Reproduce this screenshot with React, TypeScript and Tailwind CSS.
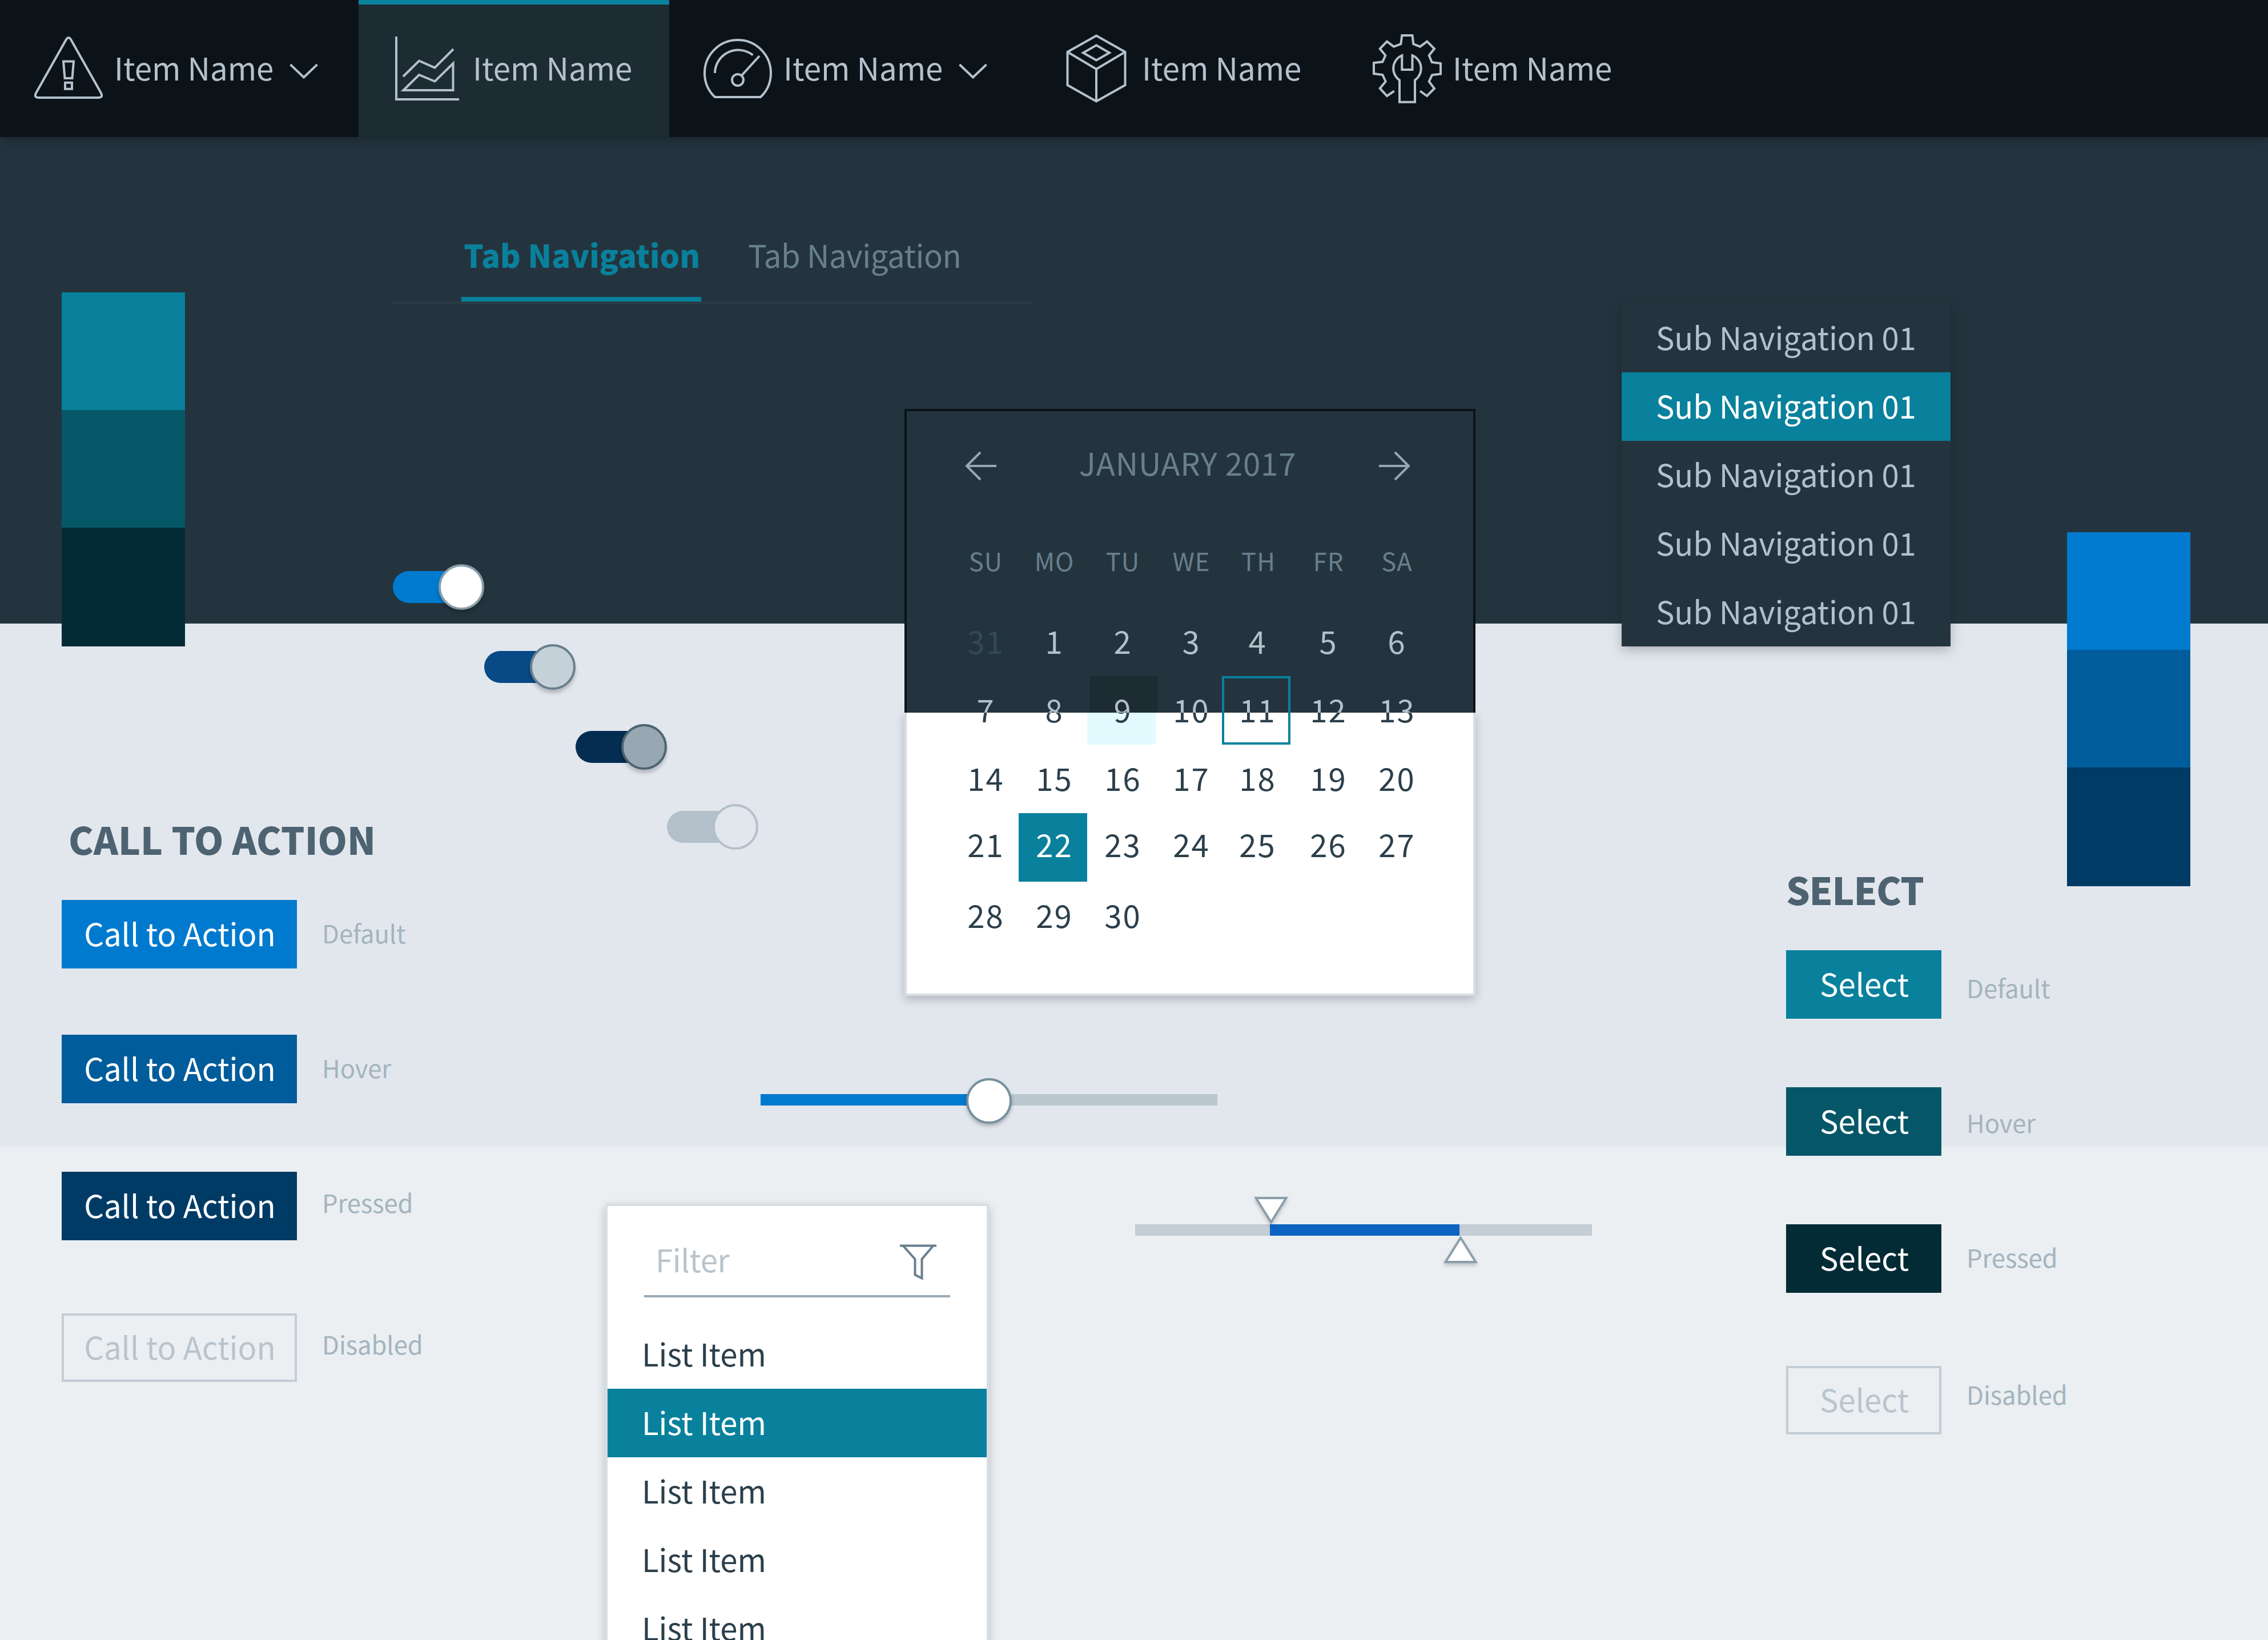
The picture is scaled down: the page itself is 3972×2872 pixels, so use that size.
import type { FC, ReactNode } from "react"

import clsx from "clsx"

interface NavItemProps {
  icon: ReactNode
  active?: boolean
  dropdown?: boolean
}

interface ButtonRowProps {
  label: string
  state: string
  buttonClass: string
  stateClass: string
  rowClass?: string
}

const AlertIcon = () => (
  <svg viewBox="0 0 120 120" className="size-[120px] shrink-0 overflow-visible" fill="none" stroke="currentColor" strokeWidth="4">
    <path d="M56 9Q60 3 64 9L117 103Q121 111 112 111H8Q-1 111 3 103Z" />
    <path d="M51 47.5H69L66.5 77H53.5Z" />
    <path d="M54 84.8H66V95.8H54Z" />
  </svg>
)

const ChartIcon = () => (
  <svg viewBox="0 0 120 120" className="size-[120px] shrink-0" fill="none" stroke="currentColor" strokeWidth="4">
    <path d="M6 4V114H116" />
    <path d="M18 74L46 46.5L73.5 58.5L106 26" />
    <path d="M18.5 98L46 71L73.5 82.5L105.5 51V98Z" />
  </svg>
)

const GaugeIcon = () => (
  <svg viewBox="0 0 120 120" className="size-[120px] shrink-0" fill="none" stroke="currentColor" strokeWidth="4">
    <path d="M20 110A58 58 0 1 1 100 110Z" />
    <path d="M20 68A41 41 0 0 1 86.5 36.5" />
    <path d="M98 38L67 72" />
    <circle cx="60" cy="80" r="10" />
  </svg>
)

const BoxIcon = () => (
  <svg viewBox="0 0 120 120" className="size-[120px] shrink-0" fill="none" stroke="currentColor" strokeWidth="4">
    <path d="M60 2.5L110.5 31V89L60 117.5L9.5 89V31Z" />
    <path d="M9.5 31L60 61L110.5 31M60 61V117" />
    <path d="M60 19.3L83 32.4L60 45.5L37 32.4Z" />
  </svg>
)

const GearIcon = () => (
  <svg viewBox="0 0 120 120" className="size-[120px] shrink-0 overflow-visible" fill="none" stroke="currentColor" strokeWidth="4">
    <path d="M37.7 99.3L25 108L12.7 94.7L22.7 82.7L17.3 71L2 69V50L17.3 48.3L22.3 37L12.7 25.3L25 12.7L37 21.7L49.3 17L51.3 2H69.5L71.3 17L83 21.7L95.3 12.7L108 25.3L98.7 37L103.7 49L119 51V69.5L104 71.3L98.7 82.7L108 95L95 108L83 99.3" />
    <path d="M47 118.7V80.3A24.8 24.8 0 0 1 51.3 37V62H69.5V37A24.8 24.8 0 0 1 74 80.3V118.7Z" />
  </svg>
)

const NavItem: FC<NavItemProps> = ({ icon, active, dropdown }) => (
  <div
    className={clsx(
      "flex items-center h-[240px] pl-[60px] border-t-8",
      active ? "bg-[#1d2b33] border-[#09819c]" : "border-transparent",
      dropdown ? "w-[628px]" : "w-[544px]",
    )}
  >
    <div className="flex items-center pb-2">
      {icon}
      <span className="w-[284px] pb-1 ml-5">Item Name</span>
      {dropdown && (
        <svg viewBox="0 0 64 48" className="w-16 h-12 ml-5" fill="none" stroke="currentColor" strokeWidth="4">
          <path d="M4.5 17L28 39.5L51.5 17" />
        </svg>
      )}
    </div>
  </div>
)

const ButtonRow: FC<ButtonRowProps> = ({ label, state, buttonClass, stateClass, rowClass }) => (
  <div className={clsx("flex h-[120px]", rowClass)}>
    <button className={clsx("flex items-center justify-center h-[120px] pb-1 pl-0.5 shrink-0", buttonClass)}>{label}</button>
    <span className={clsx("ml-11 h-[60px] leading-[60px] text-[43.6px] tracking-[-0.1px] text-[#a3b4be]", stateClass)}>{state}</span>
  </div>
)

const toggles = [
  { row: "", track: "bg-[#007acf]", knob: "bg-white border-[#8a9eaa] shadow-[0_6px_6px_rgba(0,0,0,0.2)]" },
  { row: "ml-40", track: "bg-[#084a86]", knob: "bg-[#c5d1d8] border-[#687f8d] shadow-[0_6px_6px_rgba(0,0,0,0.2)]" },
  { row: "ml-80", track: "bg-[#042d51]", knob: "bg-[#97a8b2] border-[#4d6370] shadow-[0_6px_6px_rgba(0,0,0,0.2)]" },
  { row: "ml-[480px]", track: "bg-[#b3c0c9]", knob: "bg-[#e2e7ee] border-[#b3c0c9]" },
]

const weekdays = ["SU", "MO", "TU", "WE", "TH", "FR", "SA"]

const weeks = [
  ["31", "1", "2", "3", "4", "5", "6"],
  ["7", "8", "9", "10", "11", "12", "13"],
  ["14", "15", "16", "17", "18", "19", "20"],
  ["21", "22", "23", "24", "25", "26", "27"],
  ["28", "29", "30"],
]

// the second week sits on the dark / light split, so its digits change colour half way down
const weekColors = [
  "text-[#b3c0cb] pb-1",
  "text-transparent bg-clip-text bg-[linear-gradient(#b3c0cb_64px,#2c3f4b_64px)] pb-1",
  "text-[#2c3f4b] pb-1",
  "text-[#2c3f4b] pb-3",
  "text-[#2c3f4b] pb-1",
]

const Calendar = () => (
  <div className="relative w-[1000px] h-[1028px] mt-[184px] shrink-0">
    <div className="absolute inset-0 flex flex-col">
      <div className="relative z-10 h-[532px] bg-[#24343e] border-x-4 border-t-4 border-[#0b1319]" />
      <div className="flex-1 bg-white border-x-4 border-b-4 border-[#d7dee4] shadow-[0_6px_16px_rgba(0,0,0,0.22)]" />
    </div>
    <div className="relative z-20 px-20">
      <div className="flex items-center justify-between h-[200px] pl-6 pr-8">
        <svg viewBox="0 0 60 60" className="size-[60px]" fill="none" stroke="#97a8b2" strokeWidth="4">
          <path d="M57 30H5M29 6L5 30L29 54" />
        </svg>
        <span className="text-[#687f8d] tracking-[0.9px] pb-3">JANUARY 2017</span>
        <svg viewBox="0 0 60 60" className="size-[60px]" fill="none" stroke="#97a8b2" strokeWidth="4">
          <path d="M3 30H55M31 6L55 30L31 54" />
        </svg>
      </div>
      <div className="grid grid-cols-7 mt-[35px] mb-[53px]">
        {weekdays.map((day) => (
          <span
            key={day}
            className={clsx("text-center text-[43.6px] leading-[60px] tracking-[1px] text-[#687f8d]", day === "TH" ? "pl-2 -ml-1 mr-1" : "pl-[5px]")}
          >
            {day}
          </span>
        ))}
      </div>
      {weeks.map((week, i) => (
        <div key={i} className="grid grid-cols-7">
          {week.map((day, j) => (
            <div key={day} className={clsx("relative h-[120px]", j === 4 && "-ml-1 mr-1", day === "22" && "bg-[#09819c]")}>
              {day === "9" && (
                <div className="absolute inset-0">
                  <div className="w-[120px] h-16 ml-1 bg-[#1d2b33]" />
                  <div className="w-[120px] h-14 bg-[#e3faff]" />
                </div>
              )}
              {day === "11" && <div className="absolute inset-0 border-4 border-[#09819c]" />}
              <span
                className={clsx(
                  "relative flex items-center justify-center h-[120px] pl-[5px] tracking-[2px]",
                  day === "31" ? "text-[#344957] pb-1" : day === "22" ? "text-white pb-3" : weekColors[i],
                )}
              >
                {day}
              </span>
            </div>
          ))}
        </div>
      ))}
    </div>
  </div>
)

const FilterList = () => (
  <div className="w-[672px] h-[840px] ml-[372px] mt-[140px] shrink-0 bg-white border-4 border-[#d7dee4] shadow-[0_6px_16px_rgba(0,0,0,0.2)]">
    <div className="flex items-center justify-between h-[160px] mx-16 mb-10 pt-7 pl-5 pr-6 border-b-4 border-[#97a9b5]">
      <span className="pt-0.5 tracking-[-0.4px] text-[#b9c4cc]">Filter</span>
      <svg viewBox="0 0 64 64" className="size-16 mt-3" fill="none" stroke="#687f8d" strokeWidth="4">
        <path d="M0 3.5H64M6 4L26.5 27V54.5L38.5 60.5V27L58 4" />
      </svg>
    </div>
    {[0, 1, 2, 3, 4].map((n) => (
      <div
        key={n}
        className={clsx("flex items-center h-[120px] pl-[60px] pb-1", n === 1 ? "bg-[#09819c] text-white" : "text-[#2c3f4b]")}
      >
        List Item
      </div>
    ))}
  </div>
)

const App = () => {
  return (
    <div className="w-[3972px] h-[2872px] overflow-hidden font-['Noto_Sans_CJK_SC',sans-serif] text-[54.5px] leading-[72px]">
      <header className="relative z-10 flex h-[240px] bg-[#0b1319] text-[#b4c1cc] shadow-[0_4px_16px_rgba(0,0,0,0.3)]">
        <NavItem icon={<AlertIcon />} dropdown />
        <NavItem icon={<ChartIcon />} active />
        <NavItem icon={<GaugeIcon />} dropdown />
        <NavItem icon={<BoxIcon />} />
        <NavItem icon={<GearIcon />} />
      </header>

      <main className="flex h-[2632px] overflow-hidden bg-[linear-gradient(#24343e_852px,#e2e7ee_852px,#e2e7ee_1768px,#ebeff2_1768px)]">
        <section className="w-[688px] shrink-0 pl-[108px] pt-[272px]">
          <div className="w-[216px]">
            <div className="h-[206px] bg-[#09819c]" />
            <div className="h-[206px] bg-[#055768]" />
            <div className="h-[208px] bg-[#022b35]" />
          </div>
          <h2 className="ml-3 mt-[301px] mb-[71px] text-[65.5px] font-black whitespace-nowrap text-[#4d6371]">CALL TO ACTION</h2>
          <ButtonRow label="Call to Action" state="Default" buttonClass="w-[412px] bg-[#007acf] text-white" stateClass="mt-[27px]" />
          <ButtonRow label="Call to Action" state="Hover" buttonClass="w-[412px] bg-[#005c9b] text-white" stateClass="mt-[27px]" rowClass="mt-[116px]" />
          <ButtonRow label="Call to Action" state="Pressed" buttonClass="w-[412px] bg-[#003b66] text-white" stateClass="mt-[23px]" rowClass="mt-[120px]" />
          <ButtonRow label="Call to Action" state="Disabled" buttonClass="w-[412px] border-4 border-[#c4ccd4] text-[#b9c4cc]" stateClass="mt-[23px]" rowClass="mt-32" />
        </section>

        <section className="w-[2152px] shrink-0 pt-[176px]">
          <nav className="flex gap-[82px] w-[1120px] h-[116px] pl-[120px] border-b-4 border-[#2a3c46]">
            <span className="w-[420px] h-[112px] pl-1 border-b-8 border-[#09819c] leading-[60px] font-black text-[#09819c]">Tab Navigation</span>
            <span className="leading-[60px] tracking-[-0.45px] text-[#687f8d]">Tab Navigation</span>
          </nav>

          <div className="flex">
            <div className="flex flex-col gap-[60px] w-[896px] pt-[456px]">
              {toggles.map((toggle) => (
                <div key={toggle.track} className={clsx("flex items-center w-40 h-20", toggle.row)}>
                  <div className={clsx("w-[120px] h-14 rounded-l-full", toggle.track)} />
                  <div className={clsx("size-20 -ml-10 rounded-full border-4", toggle.knob)} />
                </div>
              ))}
            </div>
            <Calendar />
          </div>

          <div className="flex items-center w-[800px] h-20 mt-36 ml-[644px]">
            <div className="w-[400px] h-5 -mt-1 bg-[#007acf]" />
            <div className="relative z-10 size-20 -mx-10 shrink-0 rounded-full bg-white border-4 border-[#76909e] shadow-[0_4px_6px_rgba(0,0,0,0.25)]" />
            <div className="w-[400px] h-5 -mt-1 bg-[#bac7cf]" />
          </div>

          <div className="flex items-start">
            <FilterList />
            <div className="relative flex w-[800px] ml-64 mt-44">
              <div className="w-[236px] h-5 bg-[#c4ccd4]" />
              <div className="w-[332px] h-5 bg-[#0d63c1]" />
              <div className="w-[232px] h-5 bg-[#c4ccd4]" />
              <svg viewBox="0 0 60 48" className="absolute left-[208px] -top-12 w-[60px] h-12 drop-shadow-[0_4px_3px_rgba(0,0,0,0.2)]" fill="white" stroke="#8a9ea9" strokeWidth="4">
                <path d="M3.6 2H56.4L30 44.2Z" />
              </svg>
              <svg viewBox="0 0 60 48" className="absolute left-[540px] top-5 w-[60px] h-12 drop-shadow-[0_4px_3px_rgba(0,0,0,0.2)]" fill="white" stroke="#8a9ea9" strokeWidth="4">
                <path d="M3.6 46H56.4L30 3.8Z" />
              </svg>
            </div>
          </div>
        </section>

        <section className="w-[780px] shrink-0 pt-[292px]">
          <ul className="w-[576px] bg-[#24343e] text-[#b3c0cc] shadow-[0_6px_20px_rgba(0,0,0,0.25)]">
            {[0, 1, 2, 3, 4].map((n) => (
              <li key={n} className={clsx("flex items-center h-[120px] pl-[60px] pb-1 tracking-[-0.2px]", n === 1 && "bg-[#09819c] text-white")}>
                Sub Navigation 01
              </li>
            ))}
          </ul>
          <div className="ml-72 mt-[389px]">
            <h2 className="mb-[71px] text-[65.5px] font-black tracking-[-1.3px] text-[#4d6371]">SELECT</h2>
            <ButtonRow label="Select" state="Default" buttonClass="w-[272px] bg-[#09819c] text-white" stateClass="mt-[35px]" />
            <ButtonRow label="Select" state="Hover" buttonClass="w-[272px] bg-[#055768] text-white" stateClass="mt-[31px]" rowClass="mt-[120px]" />
            <ButtonRow label="Select" state="Pressed" buttonClass="w-[272px] bg-[#022b35] text-white" stateClass="mt-[27px]" rowClass="mt-[120px]" />
            <ButtonRow label="Select" state="Disabled" buttonClass="w-[272px] border-4 border-[#c4ccd4] text-[#b9c4cc]" stateClass="mt-[19px]" rowClass="mt-32" />
          </div>
        </section>

        <section className="w-[216px] shrink-0 pt-[692px]">
          <div className="h-[206px] bg-[#007acf]" />
          <div className="h-[206px] bg-[#005c9b]" />
          <div className="h-[208px] bg-[#003b66]" />
        </section>
      </main>
    </div>
  )
}

export default App
